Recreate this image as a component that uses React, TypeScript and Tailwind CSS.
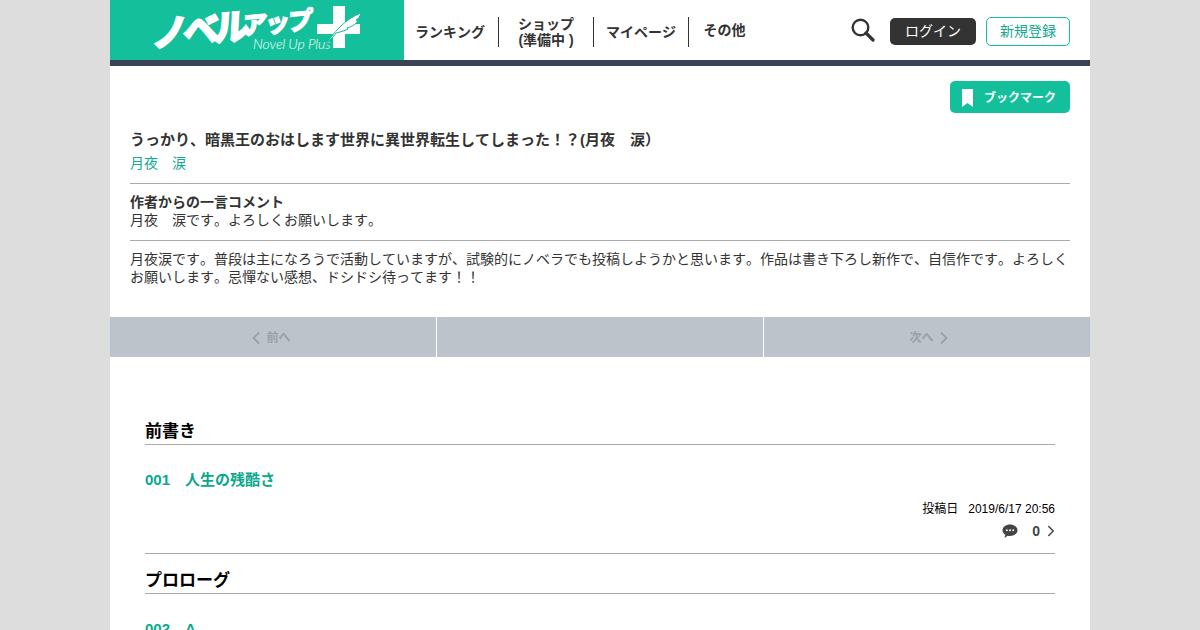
import React from 'react';
import { ChevronLeft, ChevronRight } from 'lucide-react';

const FONT = "font-['Liberation_Sans','Noto_Sans_CJK_JP',sans-serif]";

function Logo() {
  return (
    <div className="w-[294px] h-[60px] bg-[#14bf9b] relative overflow-hidden shrink-0">
      <span className="absolute left-[42px] top-[9px] text-[36px] leading-[44px] font-black text-white tracking-[-5px] whitespace-nowrap [-webkit-text-stroke:1.5px_white] -rotate-[5deg] -skew-x-[8deg]">ノベル</span>
      <span className="absolute left-[132px] top-[5px] text-[25px] leading-[36px] font-black text-white tracking-[-2px] whitespace-nowrap [-webkit-text-stroke:1px_white] -rotate-[5deg] -skew-x-[8deg]">アップ</span>
      <span className="absolute left-[143px] top-[36px] text-[14px] leading-[16px] text-white italic font-['Lato',sans-serif] font-light whitespace-nowrap tracking-[-0.2px]">Novel Up Plus</span>
      <svg className="absolute left-[205px] top-[5px]" width="48" height="46" viewBox="0 0 48 46">
        <path d="M18 1h12v18h15v10H30v14H18V29H2V19h16z" fill="#fff" />
        <path d="M10 41C18 28 30 14 46 8c-1 4-3 6-5 7l2 1c-3 4-7 6-11 7l1 1c-4 2-8 3-12 4-3 4-7 8-11 13z" fill="#fff" stroke="#14bf9b" strokeWidth="1" />
      </svg>
    </div>
  );
}

function NavItem({ children, width, border = true }: { children: React.ReactNode; width: string; border?: boolean }) {
  return (
    <div className={`${width} h-[30px] flex items-center justify-center text-center text-[14px] leading-[16px] font-bold text-[#333] ${border ? 'border-r border-[#333]' : ''}`}>
      {children}
    </div>
  );
}

function Episode({ section, title, date }: { section: string; title: string; date?: string }) {
  return (
    <div>
      <h2 className="text-[17px] leading-[29px] font-bold text-black border-b border-[#aaa] h-[28px]">{section}</h2>
      <div className="mt-[24px] text-[15px] leading-[22px] font-bold text-[#0aa88d] whitespace-pre">{title}</div>
      {date && (
        <>
          <div className="mt-[9px] flex justify-end text-[12px] leading-[18px] text-black whitespace-pre">投稿日{'   '}{date}</div>
          <div className="mt-[3px] flex items-center justify-end h-[20px] text-[#444]">
            <svg width="16" height="16" viewBox="0 0 16 16" className="mr-[14px]">
              <path d="M8 1.500c4.200 0 7.500 2.600 7.500 5.800S12.200 13 8 13c-.8 0-1.500-.1-2.200-.2L2.500 15l.8-3.300C1.500 10.600.5 9 .5 7.300.5 4.100 3.800 1.500 8 1.500z" fill="#444" />
              <circle cx="4.800" cy="7.300" r="1" fill="#fff" />
              <circle cx="8" cy="7.300" r="1" fill="#fff" />
              <circle cx="11.200" cy="7.300" r="1" fill="#fff" />
            </svg>
            <span className="text-[14px] font-bold">0</span>
            <ChevronRight size={18} strokeWidth={2} className="ml-[2px] mr-[-5px]" />
          </div>
          <div className="mt-[12px] border-b border-[#aaa]" />
        </>
      )}
    </div>
  );
}

export default function App() {
  return (
    <div className={`${FONT} [font-kerning:none] bg-[#dddddd] h-[630px] overflow-hidden`}>
      <div className="w-[980px] mx-auto bg-white h-[630px] overflow-hidden">
        {/* Header */}
        <header className="h-[66px] border-b-[6px] border-[#3a4354] flex">
          <Logo />
          <nav className="flex items-center pt-[4px]">
            <NavItem width="w-[95px] pr-[2px]">ランキング</NavItem>
            <NavItem width="w-[95px]">
              <span>ショップ<br />(準備中 )</span>
            </NavItem>
            <NavItem width="w-[95px]">マイページ</NavItem>
            <NavItem width="w-[71px]" border={false}><span className="mt-[-4px]">その他</span></NavItem>
          </nav>
          <div className="ml-auto flex items-center gap-[14px] pr-[20px] pt-[3px]">
            <svg width="24" height="24" viewBox="0 0 24 24" className="mt-[-3px] mr-[1px]">
              <circle cx="9.500" cy="9.500" r="7.800" fill="none" stroke="#333" strokeWidth="2.400" />
              <path d="M15 15l7 7" stroke="#333" strokeWidth="3.200" strokeLinecap="round" />
            </svg>
            <button className="w-[86px] h-[27px] rounded-[5px] bg-[#333] text-white text-[14px]">ログイン</button>
            <button className="w-[84px] h-[29px] ml-[-4px] rounded-[5px] border border-[#14bf9b] text-[#14a98b] text-[14px]">新規登録</button>
          </div>
        </header>

        {/* Work info */}
        <section className="px-[20px] pt-[15px] h-[251px]">
          <div className="flex justify-end">
            <button className="w-[120px] h-[32px] rounded-[5px] bg-[#14bf9b] text-white text-[12px] font-bold flex items-center pl-[12px] pt-[1px]">
              <svg width="11" height="18" viewBox="0 0 11 18" className="mr-[11px]"><path d="M0 0h11v18l-5.500-4L0 18z" fill="#fff" /></svg>
              ブックマーク
            </button>
          </div>
          <h1 className="mt-[16px] text-[15px] leading-[22px] font-bold text-[#333]">うっかり、暗黒王のおはします世界に異世界転生してしまった！？(月夜　涙）</h1>
          <div className="mt-[1px] text-[14px] leading-[22px] text-[#12ab92]">月夜　涙</div>
          <div className="mt-[9px] border-t border-[#aaa] pt-[9px] text-[14px] leading-[18px] text-[#333]">
            <div className="font-bold">作者からの一言コメント</div>
            <div>月夜　涙です。よろしくお願いします。</div>
          </div>
          <div className="mt-[11px] border-t border-[#aaa] pt-[9px] text-[14px] leading-[18px] text-[#333]">
            月夜涙です。普段は主になろうで活動していますが、試験的にノベラでも投稿しようかと思います。作品は書き下ろし新作で、自信作です。よろしくお願いします。忌憚ない感想、ドシドシ待ってます！！
          </div>
        </section>

        {/* Pager */}
        <div className="h-[40px] flex bg-[#bcc3ca] text-[#9aa0a9] text-[12px] font-bold">
          <div className="w-[327px] flex items-center justify-center border-r border-white pr-[6px] pt-[1px]">
            <ChevronLeft size={20} strokeWidth={2.200} className="ml-[-3px]" />
            <span>前へ</span>
          </div>
          <div className="w-[327px] border-r border-white" />
          <div className="flex-1 flex items-center justify-center pl-[6px] pt-[1px]">
            <span>次へ</span>
            <ChevronRight size={20} strokeWidth={2.200} className="mr-[-3px]" />
          </div>
        </div>

        {/* Episode list */}
        <main className="px-[35px] pt-[60px] flex flex-col gap-[12px]">
          <Episode section="前書き" title={'001　人生の残酷さ'} date="2019/6/17 20:56" />
          <Episode section="プロローグ" title={'002　A'} />
        </main>
      </div>
    </div>
  );
}
